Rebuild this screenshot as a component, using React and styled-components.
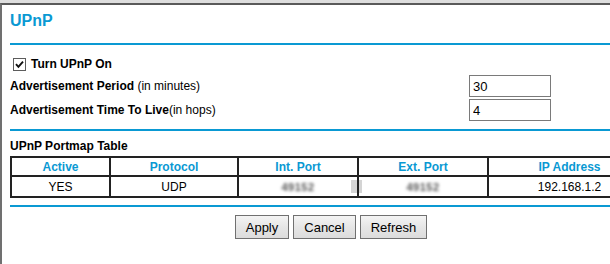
import React from "react";
import styled, { createGlobalStyle } from "styled-components";

const Global = createGlobalStyle`
  html, body { margin: 0; padding: 0; overflow: hidden; background: #fff; }
  body { font-family: "Liberation Sans", Arial, sans-serif; font-size: 12px; color: #000; }
`;

const BLUE = "#0a99d3";

const TopStrip = styled.div`
  height: 3px;
  background: #dedede;
  width: 660px;
`;

const Frame = styled.div`
  width: 650px;
  border-top: 2px solid #5a5a5a;
  border-left: 2px solid #707070;
  padding: 0 0 30px 8px;
  box-sizing: content-box;
`;

const Content = styled.div`
  width: 642px;
  display: flex;
  flex-direction: column;
`;

const Title = styled.h1`
  margin: 0;
  padding-top: 7px;
  height: 31px;
  font-size: 16px;
  line-height: 18px;
  font-weight: bold;
  color: ${BLUE};
`;

const Rule = styled.div`
  height: 2px;
  background: ${BLUE};
  margin-top: ${(p) => p.$top || 0}px;
`;

const CheckRow = styled.label`
  margin-top: 9px;
  height: 20px;
  display: flex;
  align-items: center;
  font-weight: bold;
  font-size: 12px;
  cursor: pointer;
`;

const HiddenInput = styled.input`
  position: absolute;
  opacity: 0;
  width: 0;
  height: 0;
  margin: 0;
`;

const Box = styled.span`
  box-sizing: border-box;
  width: 13px;
  height: 13px;
  margin: 0 5px 0 3px;
  border: 1px solid #5c5c5c;
  background: #fff;
  display: flex;
  align-items: center;
  justify-content: center;
`;

const CheckBox = ({ checked }) => (
  <Box>
    {checked && (
      <svg width="11" height="11" viewBox="0 0 11 11">
        <path d="M2 5.2 L4.4 7.8 L9 2.6" fill="none" stroke="#111" strokeWidth="1.9" />
      </svg>
    )}
  </Box>
);

const FieldRow = styled.div`
  height: 24px;
  display: grid;
  grid-template-columns: 459px 82px;
  align-items: center;
`;

const Label = styled.div`
  font-size: 12px;
  white-space: nowrap;
  b { font-weight: bold; }
`;

const TextInput = styled.input`
  box-sizing: border-box;
  width: 82px;
  height: 22px;
  border: 1px solid #7a7a7a;
  padding: 0 3px;
  font-family: "Liberation Sans", Arial, sans-serif;
  font-size: 13px;
  color: #000;
  outline: none;
`;

const SubHead = styled.div`
  padding-top: 8px;
  height: 14px;
  line-height: 14px;
  margin-bottom: 3px;
  font-weight: bold;
  font-size: 12px;
`;

const Grid = styled.div`
  display: grid;
  grid-template-columns: 97px 126px 118px 128px 161px;
  gap: 2px;
  padding: 2px;
  background: #222;
  width: 642px;
  box-sizing: border-box;
`;

const Cell = styled.div`
  position: relative;
  background: #fff;
  height: ${(p) => (p.$head ? 17 : 19)}px;
  display: flex;
  align-items: center;
  justify-content: center;
  font-size: 12px;
  font-weight: ${(p) => (p.$head ? "bold" : "normal")};
  color: ${(p) => (p.$head ? BLUE : "#000")};
`;

const Blur = styled.span`
  color: #555;
  filter: blur(1.4px);
  font-size: 11px;
  font-weight: bold;
  letter-spacing: 0.5px;
`;

const Patch = styled.span`
  position: absolute;
  top: 3px;
  bottom: 3px;
  width: ${(p) => p.$w}px;
  ${(p) => (p.$side === "right" ? "right: 0;" : "left: 0;")}
  background: #d4d4d4;
`;

const Buttons = styled.div`
  margin-top: 8px;
  display: flex;
  justify-content: center;
  gap: 4px;
`;

const Button = styled.button`
  height: 24px;
  padding: 0 10px;
  border: 1px solid #707070;
  border-radius: 0;
  background: linear-gradient(#f4f4f4, #e6e6e6 50%, #dcdcdc);
  font-family: "Liberation Sans", Arial, sans-serif;
  font-size: 13px;
  color: #000;
`;

const headers = ["Active", "Protocol", "Int. Port", "Ext. Port", "IP Address"];

export default function App() {
  const [on, setOn] = React.useState(true);
  return (
    <>
      <Global />
      <TopStrip />
      <Frame>
        <Content>
          <Title>UPnP</Title>
          <Rule />
          <CheckRow>
            <HiddenInput type="checkbox" checked={on} onChange={(e) => setOn(e.target.checked)} />
            <CheckBox checked={on} />
            Turn UPnP On
          </CheckRow>
          <FieldRow>
            <Label>
              <b>Advertisement Period</b> (in minutes)
            </Label>
            <TextInput defaultValue="30" />
          </FieldRow>
          <FieldRow>
            <Label>
              <b>Advertisement Time To Live</b>(in hops)
            </Label>
            <TextInput defaultValue="4" />
          </FieldRow>
          <Rule $top={7} />
          <SubHead>UPnP Portmap Table</SubHead>
          <Grid>
            {headers.map((h) => (
              <Cell $head key={h}>
                {h}
              </Cell>
            ))}
            <Cell>YES</Cell>
            <Cell>UDP</Cell>
            <Cell>
              <Blur>49152</Blur>
              <Patch $side="right" $w={6} />
            </Cell>
            <Cell>
              <Patch $side="left" $w={3} />
              <Blur>49152</Blur>
            </Cell>
            <Cell>192.168.1.2</Cell>
          </Grid>
          <Rule $top={7} />
          <Buttons>
            <Button>Apply</Button>
            <Button>Cancel</Button>
            <Button>Refresh</Button>
          </Buttons>
        </Content>
      </Frame>
    </>
  );
}
